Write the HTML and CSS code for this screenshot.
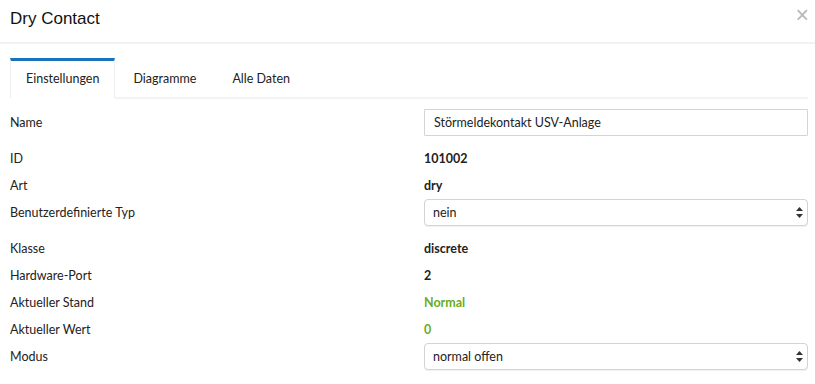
FILE: index.html
```html
<!DOCTYPE html>
<html lang="de">
<head>
    <meta charset="UTF-8">
    <title>Dry Contact</title>
    <link rel="stylesheet" href="styles.css">
</head>
<body>
    <div class="modal">
        <div class="modal-header">
            <h1>Dry Contact</h1>
            <span class="close">&times;</span>
        </div>

        <div class="modal-body">
            <ul class="tabs">
                <li class="tab active">Einstellungen</li>
                <li class="tab">Diagramme</li>
                <li class="tab">Alle Daten</li>
            </ul>

            <div class="row field">
                <label>Name</label>
                <input class="text-input" type="text" value="Störmeldekontakt USV-Anlage">
            </div>
            <div class="row">
                <label>ID</label>
                <span class="value">101002</span>
            </div>
            <div class="row">
                <label>Art</label>
                <span class="value">dry</span>
            </div>
            <div class="row field">
                <label>Benutzerdefinierte Typ</label>
                <div class="select-wrap">
                    <select><option>nein</option></select>
                    <svg class="arrows" width="7" height="11" viewBox="0 0 7 11"><path d="M3.5 0 L7 4 L0 4 Z M3.5 11 L7 7 L0 7 Z" fill="#333"/></svg>
                </div>
            </div>
            <div class="row">
                <label>Klasse</label>
                <span class="value">discrete</span>
            </div>
            <div class="row">
                <label>Hardware-Port</label>
                <span class="value">2</span>
            </div>
            <div class="row">
                <label>Aktueller Stand</label>
                <span class="value ok">Normal</span>
            </div>
            <div class="row">
                <label>Aktueller Wert</label>
                <span class="value ok">0</span>
            </div>
            <div class="row field">
                <label>Modus</label>
                <div class="select-wrap">
                    <select><option>normal offen</option></select>
                    <svg class="arrows" width="7" height="11" viewBox="0 0 7 11"><path d="M3.5 0 L7 4 L0 4 Z M3.5 11 L7 7 L0 7 Z" fill="#333"/></svg>
                </div>
            </div>
        </div>
    </div>
</body>
</html>
```

FILE: styles.css
```css
body {
    margin: 0;
    background-color: #fff;
    color: #222;
    font-family: Lato, "Open Sans", sans-serif;
    font-size: 12.5px;
}
.modal {
    width: 815px;
}
.modal-header {
    display: flex;
    justify-content: space-between;
    align-items: center;
    height: 44px;
    padding: 0 6px 0 10px;
    border-bottom: 2px solid #f2f2f2;
    box-sizing: border-box;
}
h1 {
    margin: 0 0 4px 0;
    font-family: "Liberation Sans", Arial, sans-serif;
    font-size: 17px;
    font-weight: normal;
    color: #111;
}
.close {
    font-family: "Liberation Sans", Arial, sans-serif;
    font-size: 23px;
    color: #b8b8b8;
    margin-bottom: 12px;
}
.modal-body {
    padding: 14px 7px 0 10px;
}
.tabs {
    display: flex;
    list-style: none;
    margin: 0 0 10px 0;
    padding: 0;
    border-bottom: 2px solid #f3f3f3;
}
.tab {
    height: 36px;
    line-height: 36px;
    padding: 0 17px;
    color: #222;
    border-top: 3px solid transparent;
    border-left: 1px solid transparent;
    border-right: 1px solid transparent;
    border-bottom: 2px solid transparent;
    margin-bottom: -2px;
}
.tab.active {
    padding: 0 15px;
    border-top-color: #1a73b8;
    border-left-color: #eeeeee;
    border-right-color: #eeeeee;
    border-bottom-color: #fff;
    background: #fff;
}
.row {
    display: grid;
    grid-template-columns: 414px 1fr;
    align-items: center;
    min-height: 27px;
}
.row.field {
    margin-bottom: 9px;
}
.value {
    font-weight: bold;
}
.value.ok {
    color: #6aad1f;
}
.text-input {
    height: 27px;
    box-sizing: border-box;
    border: 1px solid #d4d4d4;
    border-radius: 1px;
    padding: 0 9px;
    font-family: inherit;
    font-size: 12.5px;
    color: #222;
    outline: none;
}
.select-wrap {
    position: relative;
}
select {
    appearance: none;
    -webkit-appearance: none;
    display: block;
    width: 100%;
    height: 27px;
    box-sizing: border-box;
    border: 1px solid #d2d2d8;
    border-radius: 4px;
    background: #fff;
    padding: 0 8px;
    font-family: inherit;
    font-size: 12.5px;
    color: #222;
    box-shadow: 0 1px 1px rgba(0, 0, 0, 0.06);
}
.arrows {
    position: absolute;
    right: 5px;
    top: 8px;
}
```
